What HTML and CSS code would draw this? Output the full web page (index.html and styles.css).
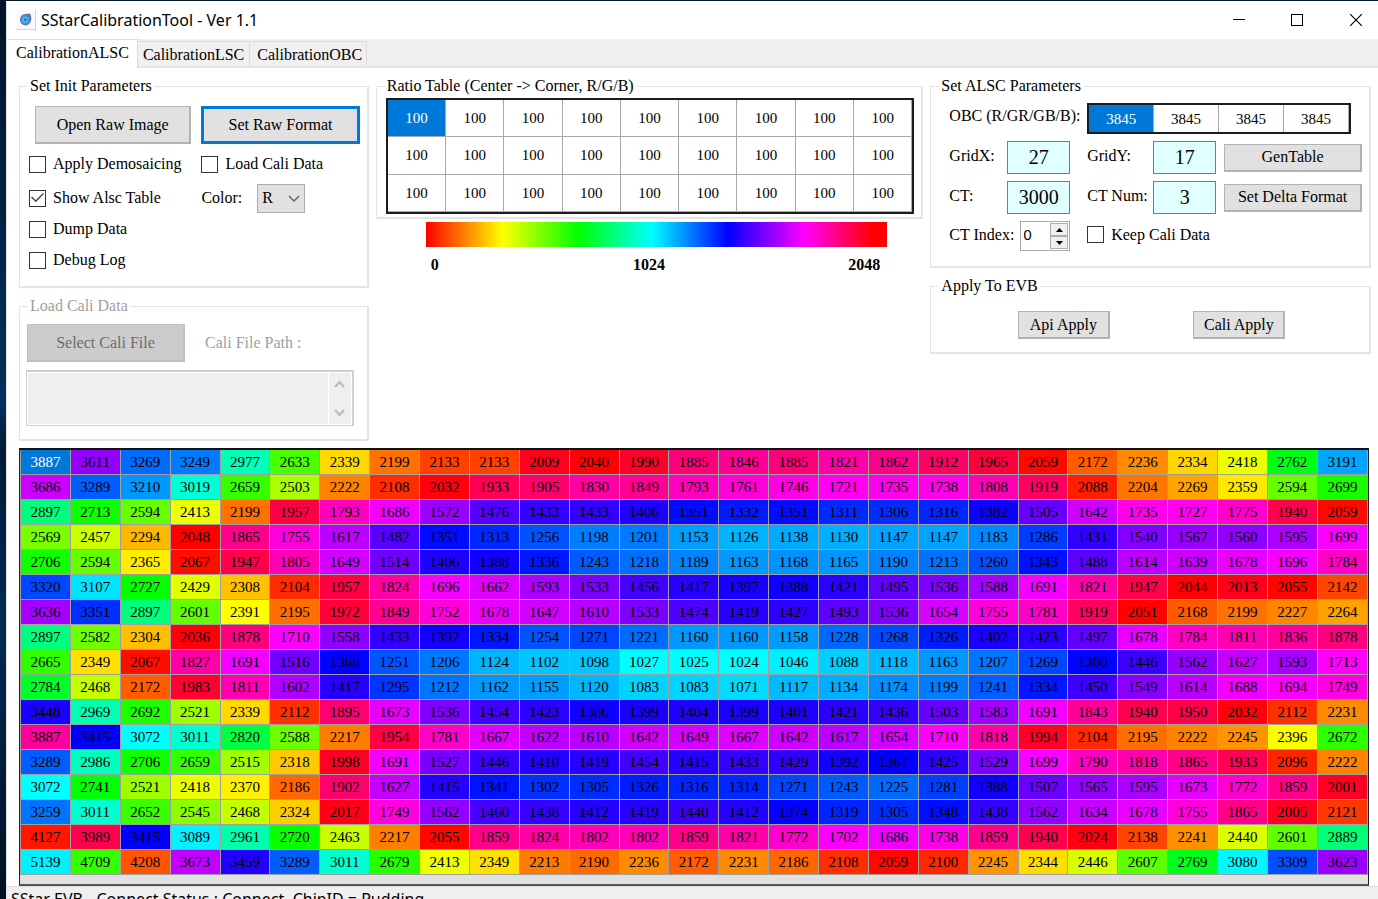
FILE: index.html
```html
<!DOCTYPE html>
<html lang="en">
<head>
<meta charset="utf-8">
<title>SStarCalibrationTool - Ver 1.1</title>
<link rel="stylesheet" href="styles.css">
</head>
<body>
<div class="window">
  <header class="titlebar">
    <svg class="app-icon" width="20" height="20" viewBox="0 0 20 20" aria-hidden="true">
      <rect x="0" y="0" width="20" height="20" fill="#d4d4d4"/>
      <rect x="0" y="0" width="19" height="19" fill="#fafafa"/>
      <path d="M13.500 3.200L15 5.500Q16 8.500 14.600 12Q12.500 15.500 9.300 15.500Q4.200 14.800 3.900 9.800Q4.300 4.300 9.500 4Q12 4 13.500 3.200Z" fill="#6a72b4"/>
      <circle cx="9.400" cy="9.800" r="4.500" fill="#4a8ad8"/>
      <circle cx="9.300" cy="9.700" r="3.200" fill="#3fbcf2"/>
      <circle cx="9.400" cy="9.800" r="1.300" fill="#2a66b8"/>
    </svg>
    <h1 class="title">SStarCalibrationTool - Ver 1.1</h1>
    <div class="window-controls">
      <button class="window-button" aria-label="Minimize"><svg width="12" height="12" viewBox="0 0 12 12"><path d="M0 5.500H12" stroke="#000"/></svg></button>
      <button class="window-button" aria-label="Maximize"><svg width="12" height="12" viewBox="0 0 12 12"><rect x=".5" y=".5" width="11" height="11" fill="none" stroke="#000"/></svg></button>
      <button class="window-button" aria-label="Close"><svg width="12" height="12" viewBox="0 0 12 12"><path d="M0 0L12 12M12 0L0 12" stroke="#000" stroke-width="1.100"/></svg></button>
    </div>
  </header>

  <nav class="tabs" role="tablist">
    <button class="tab tab-active" role="tab" aria-selected="true">CalibrationALSC</button>
    <button class="tab" role="tab">CalibrationLSC</button>
    <button class="tab" role="tab">CalibrationOBC</button>
  </nav>

  <main class="page">
    <div class="panels">
      <div class="column">
        <fieldset class="group init-group">
          <legend>Set Init Parameters</legend>
          <div class="init-grid">
            <button class="button button-first">Open Raw Image</button>
            <button class="button button-default">Set Raw Format</button>
            <label class="check"><input type="checkbox">Apply Demosaicing</label>
            <label class="check"><input type="checkbox">Load Cali Data</label>
            <label class="check"><input type="checkbox" checked>Show Alsc Table</label>
            <div class="color-field">
              <label for="color">Color:</label>
              <span class="select-box">
                <select id="color"><option>R</option><option>GR</option><option>GB</option><option>B</option></select>
                <svg class="select-arrow" width="12" height="8" viewBox="0 0 12 8" aria-hidden="true"><path d="M1 1L6 6L11 1" fill="none" stroke="#606060" stroke-width="1.400"/></svg>
              </span>
            </div>
            <label class="check check-wide"><input type="checkbox">Dump Data</label>
            <label class="check check-wide"><input type="checkbox">Debug Log</label>
          </div>
        </fieldset>

        <fieldset class="group load-group" disabled>
          <legend>Load Cali Data</legend>
          <div class="load-row">
            <button class="button">Select Cali File</button>
            <label for="path">Cali File Path :</label>
          </div>
          <div class="path-box">
            <textarea id="path"></textarea>
            <div class="scrollbar" aria-hidden="true">
              <svg width="11" height="8" viewBox="0 0 11 8"><path d="M1 7L5.500 2L10 7" fill="none" stroke="#bcbcbc" stroke-width="2.200"/></svg>
              <svg width="11" height="8" viewBox="0 0 11 8"><path d="M1 1L5.500 6L10 1" fill="none" stroke="#bcbcbc" stroke-width="2.200"/></svg>
            </div>
          </div>
        </fieldset>
      </div>

      <div class="column column-middle">
        <fieldset class="group ratio-group">
          <legend>Ratio Table (Center -&gt; Corner, R/G/B)</legend>
          <div class="ratio-box">
            <table class="data-table ratio-table">
              <tr><td class="selected">100</td><td>100</td><td>100</td><td>100</td><td>100</td><td>100</td><td>100</td><td>100</td><td>100</td></tr>
              <tr><td>100</td><td>100</td><td>100</td><td>100</td><td>100</td><td>100</td><td>100</td><td>100</td><td>100</td></tr>
              <tr><td>100</td><td>100</td><td>100</td><td>100</td><td>100</td><td>100</td><td>100</td><td>100</td><td>100</td></tr>
            </table>
          </div>
        </fieldset>
        <div class="spectrum"></div>
        <div class="scale"><span>0</span><span>1024</span><span class="scale-end">2048</span></div>
      </div>

      <div class="column">
        <fieldset class="group alsc-group">
          <legend>Set ALSC Parameters</legend>
          <div class="alsc-grid">
            <span class="obc-label">OBC (R/GR/GB/B):</span>
            <table class="data-table obc-table">
              <tr><td class="selected">3845</td><td>3845</td><td>3845</td><td>3845</td></tr>
            </table>
            <label class="c1" for="gridx">GridX:</label>
            <input class="number c2" id="gridx" type="text" value="27">
            <label class="c4" for="gridy">GridY:</label>
            <input class="number c5" id="gridy" type="text" value="17">
            <button class="button c7">GenTable</button>
            <label class="c1" for="ct">CT:</label>
            <input class="number c2" id="ct" type="text" value="3000">
            <label class="c4" for="ctnum">CT Num:</label>
            <input class="number c5" id="ctnum" type="text" value="3">
            <button class="button c7">Set Delta Format</button>
            <div class="index-field">
              <label for="ctindex">CT Index:</label>
              <span class="spinner">
                <input id="ctindex" type="text" value="0">
                <span class="spinner-buttons">
                  <button aria-label="Increase"><svg width="7" height="4" viewBox="0 0 7 4"><path d="M0 4L3.500 0L7 4Z"/></svg></button>
                  <button aria-label="Decrease"><svg width="7" height="4" viewBox="0 0 7 4"><path d="M0 0L3.500 4L7 0Z"/></svg></button>
                </span>
              </span>
            </div>
            <label class="check keep"><input type="checkbox">Keep Cali Data</label>
          </div>
        </fieldset>

        <fieldset class="group apply-group">
          <legend>Apply To EVB</legend>
          <div class="apply-row">
            <button class="button">Api Apply</button>
            <button class="button">Cali Apply</button>
          </div>
        </fieldset>
      </div>
    </div>

    <div class="heat-box">
      <table class="heat-table" id="heat"></table>
    </div>
  </main>

  <footer class="status">SStar EVB - Connect Status : Connect, ChipID = Pudding</footer>
</div>
<script src="script.js"></script>
</body>
</html>
```

FILE: styles.css
```css
* { box-sizing: border-box; }

body {
  margin: 0;
  height: 100vh;
  overflow: hidden;
  padding: 1px 0 0 6px;
  background: linear-gradient(#001428, #00305c 45%, #001a38 50%, #002a54 70%, #001022);
  font: 16px/20px "Liberation Serif", "Times New Roman", serif;
  color: #000;
}

button, input, select, textarea { font: inherit; color: inherit; margin: 0; }

.window { background: #fff; border-left: 1px solid #e6e6e6; }

.titlebar { display: flex; align-items: center; height: 38px; padding-left: 9px; }
.app-icon { flex: none; }
.title { flex: 1; margin: 0 0 0 5px; font: 400 16px/20px "Noto Sans", "Open Sans", sans-serif; }
.window-controls { display: flex; margin-right: -8px; }
.window-button {
  display: flex; align-items: center; justify-content: center;
  width: 58px; height: 38px; padding: 0; border: 0; background: none;
}
.window-button:last-child { width: 60px; }

.tabs {
  display: flex; align-items: flex-end;
  height: 29px;
  background: #efefef;
  border-bottom: 2px solid #e4e4e4;
}
.tab {
  height: 25px; padding: 2px 5px 0;
  border: 1px solid #dcdcdc; border-left: 0; border-bottom: 0;
  background: #f0f0f0;
}
.tab:last-child { padding: 2px 4px 0 7px; }
.tab-active {
  height: 29px; padding: 0 8px 3px 9px;
  margin-bottom: -2px;
  background: #fff;
}

.page { padding: 8px 7px 0 12px; }
.panels { display: grid; grid-template-columns: 350fr 548fr 441fr; column-gap: 7px; }
.column { display: flex; flex-direction: column; gap: 8px; min-width: 0; }
.column-middle { gap: 0; }

.group { margin: 0; padding: 0; min-width: 0; border: 2px solid #e4e4e4; border-width: 1px 2px 2px 1px; }
.group legend { margin-left: 8px; padding: 0 2px; }
.group:disabled { color: #a0a0a0; }

.button {
  height: 28px; padding: 0;
  border: 2px solid #b2b2b2; border-width: 1px 2px 2px 1px;
  background: #e1e1e1;
}
.button-default { border: 3px solid #0078d7; }
.button:disabled { background: #ccc; border-color: #c0c0c0; color: #6c6c6c; }

.check { display: flex; align-items: center; gap: 7px; }
.check input {
  appearance: none;
  flex: none;
  width: 17px; height: 17px;
  border: 1px solid #333;
  background: #fff;
  display: grid; place-items: center;
}
.check input:checked::before {
  content: "";
  width: 13px; height: 10px;
  background: #444;
  clip-path: polygon(0 45%, 8% 36%, 36% 72%, 92% 0, 100% 8%, 37% 92%);
}

.init-grid {
  display: grid;
  grid-template-columns: 172fr 158fr;
  grid-template-rows: 38px 40px 28px 34px 28px;
  padding: 10px 7px 12px 9px;
}
.init-grid .button { height: 38px; }
.button-first { margin: 0 10px 0 6px; }
.check-wide { grid-column: 1 / 3; }
.color-field { display: flex; align-items: center; gap: 15px; }
.select-box { position: relative; display: flex; }
.select-box select {
  appearance: none;
  width: 48px; height: 29px; padding: 0 4px;
  border: 1px solid #adadad; border-radius: 0;
  background: #e1e1e1;
}
.select-arrow { position: absolute; right: 5px; top: 11px; pointer-events: none; }

.load-row { display: flex; align-items: center; gap: 20px; padding: 8px 13px 0 7px; }
.load-row .button { width: 158px; height: 38px; }
.path-box { display: flex; margin: 8px 13px 13px 6px; border: 2px solid #d0d0d0; border-width: 2px 2px 1px 1px; background: #efefef; }
.path-box textarea { flex: 1; min-width: 0; height: 53px; padding: 2px; border: 1px solid #fff; background: #efefef; resize: none; }
.scrollbar {
  display: flex; flex-direction: column; align-items: center; justify-content: space-between;
  width: 23px; padding: 7px 0; border: 1px solid #fff; border-left: 0;
}

.data-table { width: 100%; table-layout: fixed; border-collapse: separate; border-spacing: 0; border: 2px solid #1c1c1c; font-size: 15px; }
.data-table td { padding: 0; text-align: center; border: solid #a8a8a8; border-width: 0 1px 1px 0; }
.data-table .selected { background: #0078d7; color: #fff; }

.ratio-box { padding: 2px 7px 3px 9px; }
.ratio-table { height: 116px; }
.spectrum {
  height: 25px; margin: 3px 36px 0 50px;
  background: linear-gradient(to right, #f00, #ff0 16.600%, #0f0 33%, #0ff 49%, #00f 65.500%, #f0f 82%, #f00 97%);
}
.scale { display: grid; grid-template-columns: 202fr auto 215fr; margin: 8px 43px 0 55px; font-weight: 700; }
.scale-end { text-align: right; }

.alsc-grid {
  display: grid; align-items: center; row-gap: 7px;
  grid-template-columns: 58fr 63fr 17fr 66fr 63fr 8fr 138fr;
  padding: 7px 7px 15px 18px;
}
.obc-label { grid-column: 1 / 4; padding-bottom: 6px; }
.obc-table { grid-column: 4 / 8; height: 31px; width: auto; margin-right: 11px; }
.obc-table td { border-bottom: 0; }
.c1 { grid-column: 1; padding-bottom: 3px; }
.c2 { grid-column: 2; }
.c4 { grid-column: 4; padding-bottom: 3px; }
.c5 { grid-column: 5; }
.c7 { grid-column: 7; }
.number {
  width: 100%; min-width: 0; height: 33px; padding: 0;
  border: 1px solid #7a7a7a; background: #e0ffff;
  font-size: 20px; text-align: center;
}
.index-field { grid-column: 1 / 3; display: flex; align-items: center; justify-content: space-between; white-space: nowrap; }
.index-field label { padding-bottom: 3px; }
.spinner { display: flex; width: 50px; height: 30px; padding: 1px; border: 1px solid #a8a8b0; background: #fff; }
.spinner input { flex: 1; min-width: 0; border: 0; padding: 0 0 5px 1px; font: 15px/20px "Noto Sans", sans-serif; background: none; }
.spinner-buttons { display: grid; width: 18px; }
.spinner-buttons button {
  display: flex; align-items: center; justify-content: center;
  padding: 0; border: 1px solid #adadad; background: #f0f0f0;
}
.keep { grid-column: 4 / 8; padding-bottom: 3px; }

.apply-row { display: flex; justify-content: space-evenly; padding: 15px 0 13px 3px; }
.apply-row .button { width: 92px; }

.heat-box { margin: 7px 2px 0 0; padding-bottom: 9px; border: 1px solid #222; border-top: 2px solid #111; border-bottom: 2px solid #555; background: #e1e1e1; }
.heat-table { width: 100%; table-layout: fixed; border-collapse: separate; border-spacing: 0; border-left: 1px solid #a0a0a0; font-size: 15px; line-height: 24px; }
.heat-table td { height: 25px; padding: 0; text-align: center; border: solid #a0a0a0; border-width: 0 1px 1px 0; }
.heat-table .selected { color: #fff; }

.status { height: 32px; padding: 2px 4px; border-top: 1px solid #dcdcdc; background: #f0f0f0; font: 16px/20px "Noto Sans", "Open Sans", sans-serif; }
```

FILE: script.js
```js
const rows = `
3887 3611 3269 3249 2977 2633 2339 2199 2133 2133 2009 2040 1990 1885 1846 1885 1821 1862 1912 1965 2059 2172 2236 2334 2418 2762 3191
3686 3289 3210 3019 2659 2503 2222 2108 2032 1933 1905 1830 1849 1793 1761 1746 1721 1735 1738 1808 1919 2088 2204 2269 2359 2594 2699
2897 2713 2594 2413 2199 1957 1793 1686 1572 1476 1433 1433 1406 1351 1332 1351 1311 1306 1316 1382 1505 1642 1735 1727 1775 1940 2059
2569 2457 2294 2048 1865 1755 1617 1482 1351 1313 1256 1198 1201 1153 1126 1138 1130 1147 1147 1183 1286 1431 1540 1567 1560 1595 1699
2706 2594 2365 2067 1947 1805 1649 1514 1406 1388 1336 1243 1218 1189 1163 1168 1165 1190 1213 1260 1343 1488 1614 1639 1678 1696 1784
3320 3107 2727 2429 2308 2104 1957 1824 1696 1662 1593 1533 1456 1417 1397 1388 1421 1495 1536 1588 1691 1821 1947 2044 2013 2055 2142
3636 3351 2897 2601 2391 2195 1972 1849 1752 1678 1647 1610 1533 1474 1419 1427 1493 1536 1654 1755 1781 1919 2051 2168 2199 2227 2264
2897 2582 2304 2036 1878 1710 1558 1433 1392 1334 1254 1271 1221 1160 1160 1158 1228 1268 1326 1402 1423 1497 1678 1784 1811 1836 1878
2665 2349 2067 1827 1691 1516 1368 1251 1206 1124 1102 1098 1027 1025 1024 1046 1088 1118 1163 1207 1269 1360 1446 1562 1627 1593 1713
2784 2468 2172 1983 1811 1602 1417 1295 1212 1162 1155 1120 1083 1083 1071 1117 1134 1174 1199 1241 1334 1450 1549 1614 1688 1694 1749
3448 2969 2692 2521 2339 2112 1895 1673 1536 1454 1423 1386 1399 1404 1399 1401 1421 1436 1503 1583 1691 1843 1940 1950 2032 2112 2231
3887 3415 3072 3011 2820 2588 2217 1954 1781 1667 1622 1610 1642 1649 1667 1642 1617 1654 1710 1818 1994 2104 2195 2222 2245 2396 2672
3289 2986 2706 2659 2515 2318 1998 1691 1527 1446 1410 1419 1454 1415 1433 1429 1392 1367 1425 1529 1699 1790 1818 1865 1933 2096 2222
3072 2741 2521 2418 2370 2186 1902 1627 1415 1341 1302 1305 1326 1316 1314 1271 1243 1225 1281 1388 1507 1565 1595 1673 1772 1859 2001
3259 3011 2652 2545 2468 2324 2017 1749 1562 1460 1438 1412 1419 1440 1412 1374 1319 1305 1348 1438 1562 1634 1678 1755 1865 2005 2121
4127 3989 3415 3089 2961 2720 2463 2217 2055 1859 1824 1802 1802 1859 1821 1772 1702 1686 1738 1859 1940 2024 2138 2241 2440 2601 2889
5139 4709 4208 3673 3459 3289 3011 2679 2413 2349 2213 2190 2236 2172 2231 2186 2108 2059 2100 2245 2344 2446 2607 2769 3080 3309 3623
`.trim().split("\n").map(line => line.split(" ").map(Number));

const table = document.getElementById("heat");
rows.forEach((values, r) => {
  const row = table.insertRow();
  values.forEach((value, c) => {
    const cell = row.insertCell();
    cell.textContent = value;
    // One full turn of the colour wheel covers 2048 gain steps.
    cell.style.backgroundColor = `hsl(${(value % 2048) / 2048 * 360} 100% 50%)`;
    if (r === 0 && c === 0) {
      cell.className = "selected";
      cell.style.backgroundColor = "#0078d7";
    }
  });
});
```
